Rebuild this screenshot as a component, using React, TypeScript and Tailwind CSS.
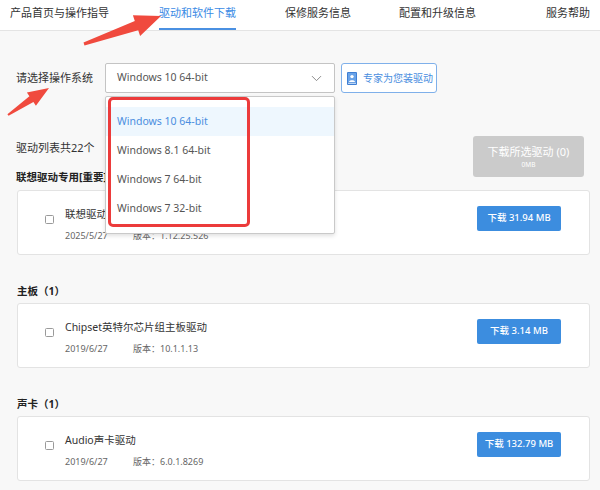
import { ChevronDown } from "lucide-react";

type Driver = {
  name: string;
  date: string;
  version: string;
  size: string;
};

type Group = {
  title: string;
  drivers: Driver[];
};

const tabs = [
  { label: "产品首页与操作指导", gap: "ml-0" },
  { label: "驱动和软件下载", gap: "ml-[50px]", active: true },
  { label: "保修服务信息", gap: "ml-[49px]" },
  { label: "配置和升级信息", gap: "ml-[48px]" },
  { label: "服务帮助", gap: "ml-[70px]" },
];

const osList = ["Windows 10 64-bit", "Windows 8.1 64-bit", "Windows 7 64-bit", "Windows 7 32-bit"];

const groups: Group[] = [
  {
    title: "联想驱动专用[重要]",
    drivers: [{ name: "联想驱动管理", date: "2025/5/27", version: "1.12.25.526", size: "31.94 MB" }],
  },
  {
    title: "主板（1）",
    drivers: [{ name: "Chipset英特尔芯片组主板驱动", date: "2019/6/27", version: "10.1.1.13", size: "3.14 MB" }],
  },
  {
    title: "声卡（1）",
    drivers: [{ name: "Audio声卡驱动", date: "2019/6/27", version: "6.0.1.8269", size: "132.79 MB" }],
  },
];

const ExpertIcon = () => (
  <svg width="10" height="13" viewBox="0 0 10 13" className="shrink-0">
    <rect x="0" y="0" width="10" height="13" rx="1" fill="#3f7fd4" />
    <rect x="1" y="1" width="8" height="9" fill="#6aa3e8" />
    <circle cx="5" cy="4.6" r="1.7" fill="#ffffff" />
    <path d="M2 10 C2 7.5 8 7.5 8 10 Z" fill="#ffffff" />
    <rect x="1" y="10.6" width="8" height="1.4" fill="#b9d4f4" />
  </svg>
);

const DriverCard = ({ name, date, version, size }: Driver) => (
  <div className="ml-px h-[65px] bg-white border border-[#e3e3e3] rounded-[3px] flex items-start pl-[27px] pr-[28px]">
    <div className="mt-[24px] w-[9px] h-[9px] border border-[#9a9a9a] rounded-[1.5px] bg-white shrink-0" />
    <div className="ml-[11px] pt-[16px] flex-1">
      <div className="text-[10.5px] leading-[14px] text-[#333]">{name}</div>
      <div className="mt-[9px] flex text-[9px] leading-[12px] text-[#666]">
        <span className="w-[68px]">{date}</span>
        <span>版本：{version}</span>
      </div>
    </div>
    <button className="mt-[15px] w-[84px] h-[25px] bg-[#3c8ddf] rounded-[2px] text-white text-[9.5px] font-medium">
      下载 {size}
    </button>
  </div>
);

export default function App() {
  return (
    <div className="relative w-[600px] h-[490px] overflow-hidden bg-[#f8f8f8] font-['Noto_Sans','Noto_Sans_CJK_SC',sans-serif]">
      {/* tabs */}
      <div className="h-[31px] bg-white border-b border-[#e4e4e4] flex items-start pl-[10px] text-[11px] text-[#333]">
        {tabs.map((t) => (
          <div
            key={t.label}
            className={`${t.gap} h-[30px] leading-[26px] whitespace-nowrap border-b-2 ${
              t.active ? "border-[#4a90e2] text-[#3b8be5]" : "border-transparent"
            }`}
          >
            {t.label}
          </div>
        ))}
      </div>

      <div className="pl-[16px] pr-[10px]">
        {/* os select */}
        <div className="mt-[32px] flex items-center h-[30px]">
          <div className="w-[89px] text-[11px] text-[#333]">请选择操作系统</div>
          <div className="relative w-[230px] h-[30px]">
            <div className="h-full bg-white border border-[#c4c4c4] rounded-[2px] flex items-center justify-between pl-[11px] pr-[9px]">
              <span className="text-[10.5px] text-[#555]">Windows 10 64-bit</span>
              <ChevronDown size={17} strokeWidth={1.2} color="#777" />
            </div>
            <div className="absolute left-0 top-[33px] z-10 w-[230px] h-[138px] bg-white border border-[#c9c9c9] rounded-[2px] shadow-[0_2px_4px_rgba(0,0,0,0.12)] py-[10px]">
              {osList.map((os, i) => (
                <div
                  key={os}
                  className={`h-[29px] pl-[11px] flex items-center text-[10.5px] ${
                    i === 0 ? "bg-[#eef7fe] text-[#4a8ee0]" : "text-[#555]"
                  }`}
                >
                  {os}
                </div>
              ))}
              <div className="absolute left-[2px] top-0 w-[142px] h-[130px] border-[3px] border-[#ec3b3b] rounded-[5px]" />
            </div>
          </div>
          <button className="ml-[6px] w-[96px] h-[30px] bg-white border border-[#7fb0ea] rounded-[3px] flex items-center pl-[5px] gap-[6px]">
            <ExpertIcon />
            <span className="text-[10px] text-[#4a8ee0] whitespace-nowrap">专家为您装驱动</span>
          </button>
        </div>

        {/* list header */}
        <div className="mt-[43px] flex justify-between items-start">
          <div className="pt-[5px]">
            <div className="text-[11px] leading-[14px] text-[#333]">驱动列表共22个</div>
            <div className="mt-[15px] text-[10.5px] leading-[14px] font-bold text-[#222]">{groups[0].title}</div>
          </div>
          <div className="mr-[6px] w-[111px] h-[41px] bg-[#cbcbcb] rounded-[3px] flex flex-col items-center justify-center text-white">
            <span className="text-[11px] leading-[14px]">下载所选驱动 (0)</span>
            <span className="text-[6.5px] leading-[9px] mt-[1px]">0MB</span>
          </div>
        </div>
        <div className="mt-[6px]">
          <DriverCard {...groups[0].drivers[0]} />
        </div>

        {groups.slice(1).map((g) => (
          <div key={g.title} className="mt-[29px]">
            <div className="pl-px text-[10.5px] leading-[14px] font-bold text-[#222]">{g.title}</div>
            <div className="mt-[5px]">
              {g.drivers.map((d) => (
                <DriverCard key={d.name} {...d} />
              ))}
            </div>
          </div>
        ))}
      </div>

      {/* annotation arrows */}
      <svg className="absolute inset-0 pointer-events-none z-20" width="600" height="490" viewBox="0 0 600 490">
        <polygon
          points="83.5,42.6 134.8,20.9 132.9,15.2 161,16 140.1,36 138.2,30.3 84.5,45.4"
          fill="#f04a3e"
        />
        <polygon
          points="7.4,114.2 29.4,96.3 26.9,92.6 49,88 35.9,105.8 33.4,102.1 8.6,115.8"
          fill="#f04a3e"
        />
      </svg>
    </div>
  );
}
